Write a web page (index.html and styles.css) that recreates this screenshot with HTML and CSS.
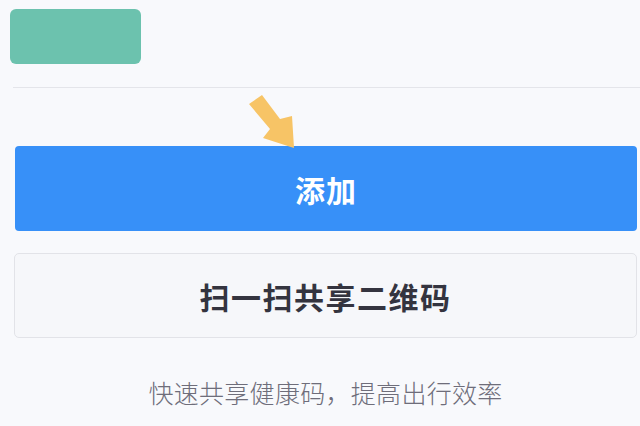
FILE: index.html
```html
<!DOCTYPE html>
<html lang="zh-CN">
<head>
<meta charset="utf-8">
<link rel="stylesheet" href="styles.css">
</head>
<body>
<div class="page">
  <div class="top">
    <div class="badge"></div>
  </div>
  <div class="divider"></div>
  <div class="spacer">
    <svg class="arrow" width="60" height="60" viewBox="240 92 60 60">
      <polygon points="249,105 262,96 280,120 292,117 294,149 263,139 270,130" fill="#f7c466"/>
    </svg>
  </div>
  <button class="btn btn-primary">添加</button>
  <button class="btn btn-secondary">扫一扫共享二维码</button>
  <p class="tip">快速共享健康码，提高出行效率</p>
</div>
</body>
</html>
```
FILE: styles.css
```css
html, body {
  margin: 0;
  padding: 0;
  background: #f8f9fc;
  font-family: "Noto Sans CJK SC", "Noto Sans", sans-serif;
}
.page {
  width: 640px;
  height: 426px;
  overflow: hidden;
  position: relative;
}
.top {
  padding: 9px 0 0 10px;
}
.badge {
  width: 131px;
  height: 55px;
  background: #6cc2ae;
  border-radius: 6px;
}
.divider {
  margin: 23px 0 0 13px;
  height: 1px;
  background: #e4e5ea;
}
.spacer {
  height: 58px;
  position: relative;
}
.arrow {
  position: absolute;
  left: 240px;
  top: 3px;
}
.btn {
  display: flex;
  align-items: center;
  justify-content: center;
  box-sizing: border-box;
  height: 85px;
  font-family: "Noto Sans CJK SC", sans-serif;
  font-weight: 700;
  border-radius: 4px;
  padding: 0;
}
.btn-primary {
  width: 622px;
  margin: 0 0 0 15px;
  background: #3790f8;
  border: none;
  color: #ffffff;
  font-size: 30px;
  letter-spacing: 1px;
}
.btn-secondary {
  width: 623px;
  margin: 22px 0 0 14px;
  background: #f6f7fa;
  border: 1px solid #e2e3e8;
  border-radius: 5px;
  color: #34343f;
  font-size: 30px;
  letter-spacing: 1.5px;
}
.tip {
  margin: 36px 0 0 14px;
  width: 623px;
  text-align: center;
  font-size: 25px;
  font-weight: 300;
  color: #6e6d7a;
  line-height: 36px;
  letter-spacing: 0.3px;
}
```
